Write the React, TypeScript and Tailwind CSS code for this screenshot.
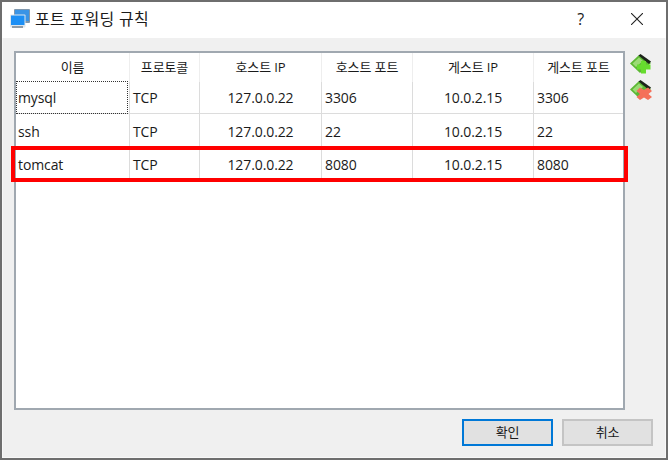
import React from "react";

const columns = [
  { label: "이름", width: "w-[114px]" },
  { label: "프로토콜", width: "w-[70px]" },
  { label: "호스트 IP", width: "w-[122px]" },
  { label: "호스트 포트", width: "w-[91px]" },
  { label: "게스트 IP", width: "w-[121px]" },
  { label: "게스트 포트", width: "w-[89px]" },
];

const rows = [
  { name: "mysql", port: "3306", height: "h-[32px]" },
  { name: "ssh", port: "22", height: "h-[35px]" },
  { name: "tomcat", port: "8080", height: "h-[31px]" },
];

const NetworkIcon = () => (
  <svg width="20" height="20" viewBox="0 0 20 20">
    <rect x="4" y="0" width="16" height="14" rx="1" fill="#7f97ad" />
    <rect x="5" y="1" width="14" height="11" fill="#3a94e6" />
    <rect x="0" y="5.5" width="15.5" height="13" rx="1" fill="#dfe6ec" />
    <rect x="1" y="6.5" width="13.5" height="9.5" fill="#1c8ff5" />
    <rect x="2" y="17" width="11" height="2" fill="#8f9ba6" />
  </svg>
);

const Diamond = () => (
  <>
    <path d="M9 1 L0 9.5 L10 19 L21 9 Z" fill="#5cb833" />
    <path d="M2.5 9.5 L9 3.5 L13 7 L6 13 Z" fill="#9bdb75" />
    <path d="M8.5 1.5 L10.5 0 L21 7.5 L19 10 Z" fill="#1c241a" />
  </>
);

const AddIcon = () => (
  <svg width="22" height="20" viewBox="0 0 22 20">
    <Diamond />
    <path d="M11 7 h5 v3.5 h4.5 v5 h-4.5 v4 h-5 v-4 h-4 v-5 h4 Z" fill="#66dc2e" />
  </svg>
);

const RemoveIcon = () => (
  <svg width="22" height="20" viewBox="0 0 22 20">
    <Diamond />
    <path d="M10 7.5 L14 10 L18 7.5 L22 11 L18.5 14 L22 17 L18 20 L14 17.5 L10 20 L6.5 17 L10 14 L6.5 11 Z" fill="#f4705a" />
  </svg>
);

const Cell = ({ width, className, children }: { width: string; className?: string; children: React.ReactNode }) => (
  <div className={`${width} h-full shrink-0 flex items-center border-r border-[#dcdcdc] last:border-r-0 ${className ?? ""}`}>
    {children}
  </div>
);

export default function App() {
  return (
    <div
      className="w-[668px] h-[460px] flex flex-col bg-[#f0f0f0] border-2 border-[#6e6e6e] text-[14px] text-[#1a1a1a] tracking-[-0.1px] overflow-hidden"
      style={{ fontFamily: '"Open Sans", "Noto Sans CJK KR", sans-serif' }}
    >
      <div className="h-[36px] bg-white flex items-center shrink-0 pl-[8px] pb-[2px]">
        <NetworkIcon />
        <span className="ml-[5px] text-[16px] tracking-[0.3px]">포트 포워딩 규칙</span>
        <span className="ml-auto mr-[47px] text-[16px]">?</span>
        <svg className="mr-[23px]" width="12" height="12" viewBox="0 0 12 12">
          <path d="M0 0 L12 12 M12 0 L0 12" stroke="#222" strokeWidth="1.1" fill="none" />
        </svg>
      </div>

      <div className="flex-1 flex flex-col pl-[12px] pt-[13px] pb-[11px] border-r border-b border-l border-[#f8f8f8]">
        <div className="flex flex-1 items-start">
          <div className="w-[611px] h-[359px] -ml-[1px] bg-white border-2 border-[#a0a8b0]">
            <div className="flex h-[29px]">
              {columns.map((c) => (
                <Cell key={c.label} width={c.width} className="justify-center text-[13px] border-[#eeeeee]">
                  {c.label}
                </Cell>
              ))}
            </div>
            {rows.map((r, i) => (
              <div key={r.name} className={`flex ${r.height} border-b border-[#dcdcdc]`}>
                <Cell width={columns[0].width}>
                  {i === 0 ? (
                    <span className="w-[112px] h-[33px] border border-dotted border-[#333] flex items-center pl-[1px]">
                      {r.name}
                    </span>
                  ) : (
                    <span className="pl-[2px]">{r.name}</span>
                  )}
                </Cell>
                <Cell width={columns[1].width} className="pl-[3px]">TCP</Cell>
                <Cell width={columns[2].width} className="justify-center">127.0.0.22</Cell>
                <Cell width={columns[3].width} className="pl-[3px]">{r.port}</Cell>
                <Cell width={columns[4].width} className="justify-center">10.0.2.15</Cell>
                <Cell width={columns[5].width} className="pl-[3px]">{r.port}</Cell>
              </div>
            ))}
          </div>
          <div className="flex flex-col ml-[5px] mt-[3px] gap-[6px]">
            <AddIcon />
            <RemoveIcon />
          </div>
        </div>

        <div className="flex justify-end gap-[9px] pr-[12px] shrink-0">
          <button className="w-[91px] h-[27px] bg-[#e1e1e1] border-2 border-[#0078d7] text-[13px]">확인</button>
          <button className="w-[91px] h-[27px] bg-[#e1e1e1] border-2 border-[#c4c4c4] text-[13px]">취소</button>
        </div>
      </div>

      <div className="absolute left-[11px] top-[146px] w-[617px] h-[36px] border-4 border-[#ff0000]" />
    </div>
  );
}
